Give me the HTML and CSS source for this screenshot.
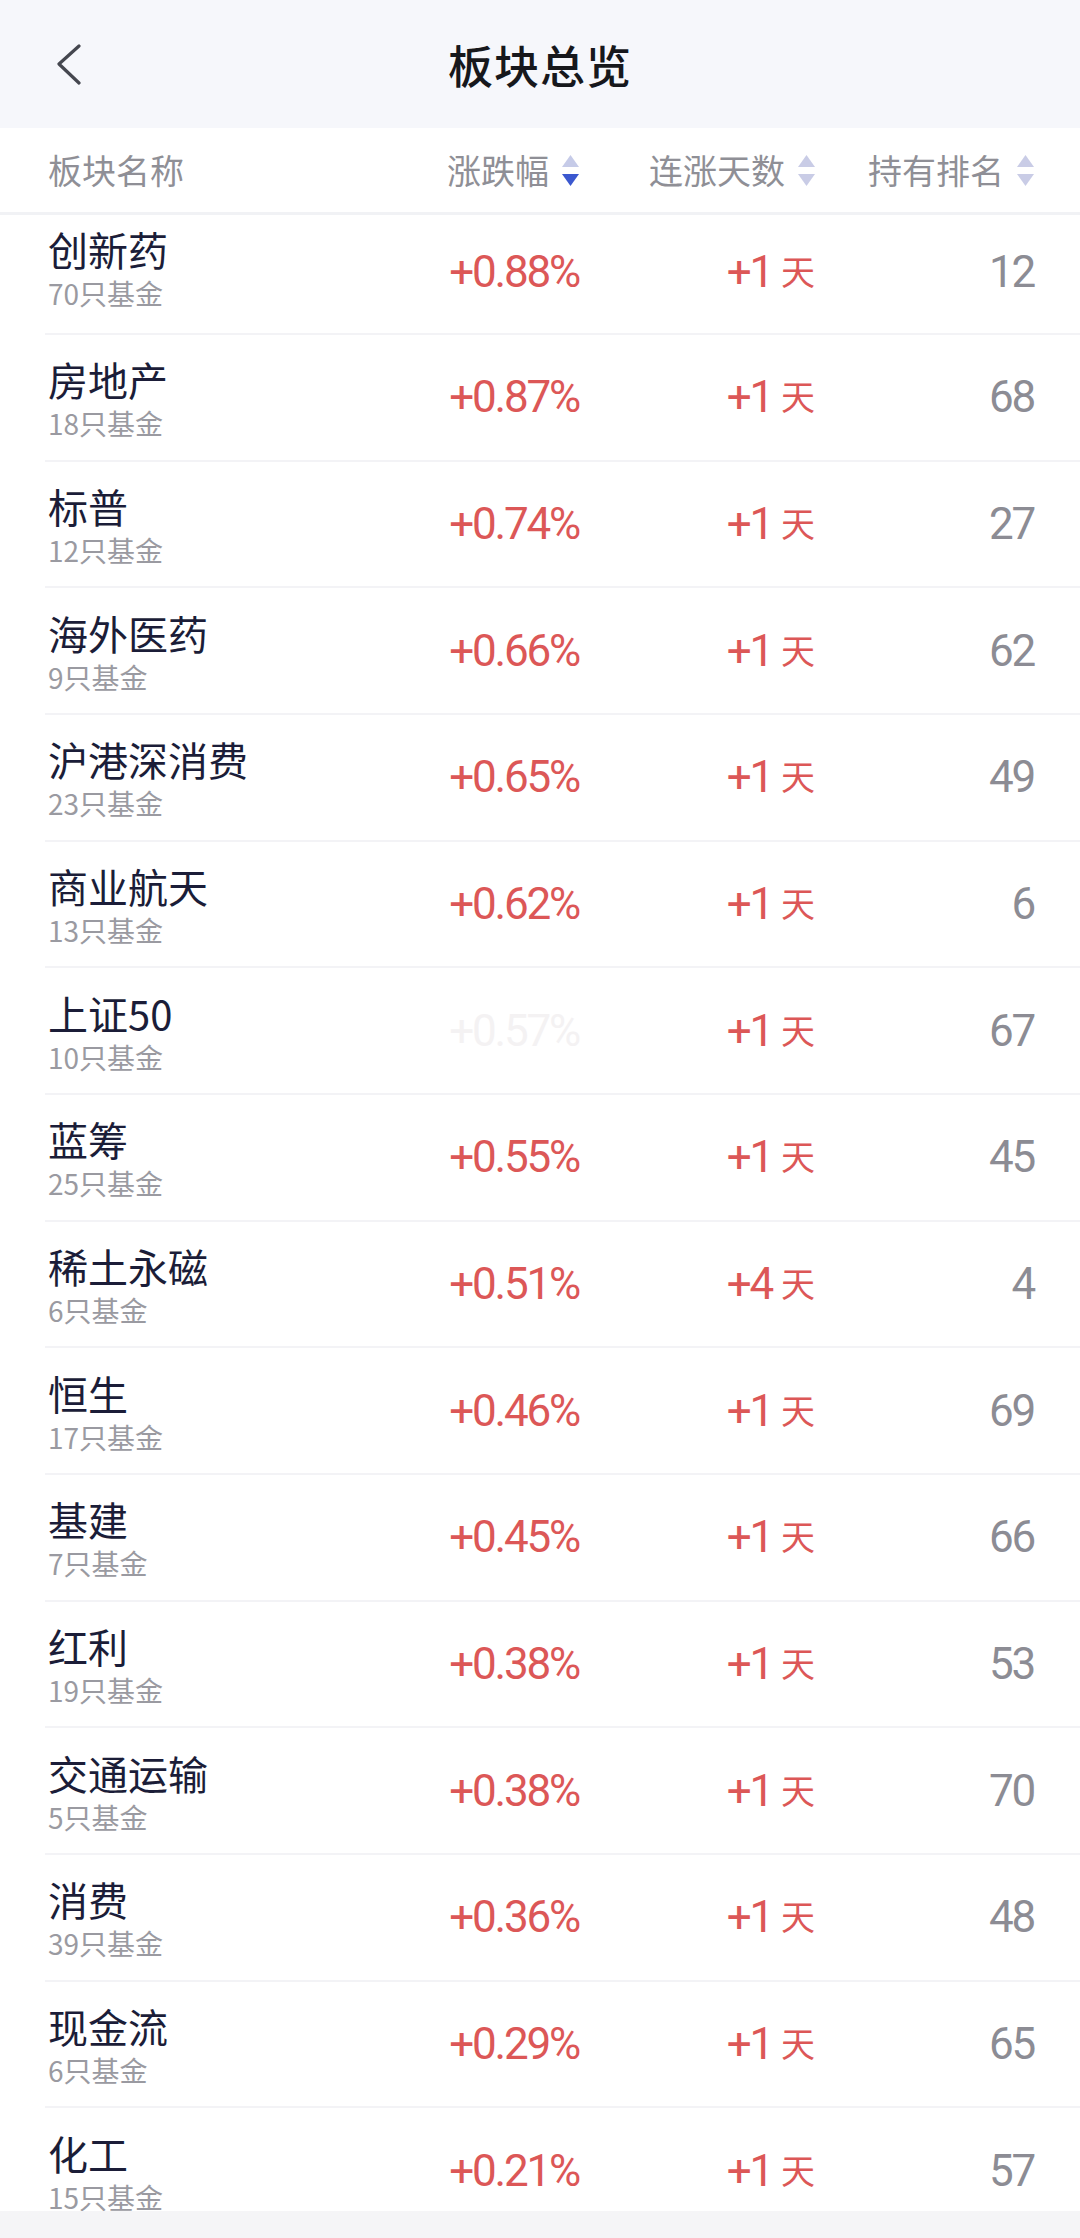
FILE: index.html
```html
<!DOCTYPE html>
<html lang="zh-CN">
<head>
    <meta charset="UTF-8">
    <meta name="viewport" content="width=device-width, initial-scale=1.0">
    <title>板块总览</title>
    <link rel="stylesheet" href="styles.css">
</head>
<body>

    <header class="nav-bar">
        <button class="back" type="button" aria-label="返回">
            <svg width="26" height="42" viewBox="0 0 26 42">
                <polyline points="23,2 3,20 23,39" fill="none" stroke="#45474f" stroke-width="3.2" stroke-linecap="round" stroke-linejoin="round"/>
            </svg>
        </button>
        <h1>板块总览</h1>
    </header>

    <!-- 表头 -->
    <div class="table-head">
        <div class="col-name">板块名称</div>
        <div class="col-sort">涨跌幅
            <svg class="sort" width="17" height="31" viewBox="0 0 17 31">
                <polygon points="8.5,0 17,12 0,12" fill="#c6cbe8"/>
                <polygon points="0,19 17,19 8.5,31" fill="#3b58cf"/>
            </svg>
        </div>
        <div class="col-sort">连涨天数
            <svg class="sort" width="17" height="31" viewBox="0 0 17 31">
                <polygon points="8.5,0 17,12 0,12" fill="#c9cce6"/>
                <polygon points="0,19 17,19 8.5,31" fill="#c9cce6"/>
            </svg>
        </div>
        <div class="col-sort">持有排名
            <svg class="sort" width="17" height="31" viewBox="0 0 17 31">
                <polygon points="8.5,0 17,12 0,12" fill="#c9cce6"/>
                <polygon points="0,19 17,19 8.5,31" fill="#c9cce6"/>
            </svg>
        </div>
    </div>

    <!-- 板块列表 -->
    <main class="list">
        <div class="row">
            <div class="name-cell"><div class="name">创新药</div><div class="count">70只基金</div></div>
            <div class="pct">+0.88%</div>
            <div class="days">+1<span class="unit">天</span></div>
            <div class="rank">12</div>
        </div>
        <div class="row">
            <div class="name-cell"><div class="name">房地产</div><div class="count">18只基金</div></div>
            <div class="pct">+0.87%</div>
            <div class="days">+1<span class="unit">天</span></div>
            <div class="rank">68</div>
        </div>
        <div class="row">
            <div class="name-cell"><div class="name">标普</div><div class="count">12只基金</div></div>
            <div class="pct">+0.74%</div>
            <div class="days">+1<span class="unit">天</span></div>
            <div class="rank">27</div>
        </div>
        <div class="row">
            <div class="name-cell"><div class="name">海外医药</div><div class="count">9只基金</div></div>
            <div class="pct">+0.66%</div>
            <div class="days">+1<span class="unit">天</span></div>
            <div class="rank">62</div>
        </div>
        <div class="row">
            <div class="name-cell"><div class="name">沪港深消费</div><div class="count">23只基金</div></div>
            <div class="pct">+0.65%</div>
            <div class="days">+1<span class="unit">天</span></div>
            <div class="rank">49</div>
        </div>
        <div class="row">
            <div class="name-cell"><div class="name">商业航天</div><div class="count">13只基金</div></div>
            <div class="pct">+0.62%</div>
            <div class="days">+1<span class="unit">天</span></div>
            <div class="rank">6</div>
        </div>
        <div class="row">
            <div class="name-cell"><div class="name">上证50</div><div class="count">10只基金</div></div>
            <div class="pct faded">+0.57%</div>
            <div class="days">+1<span class="unit">天</span></div>
            <div class="rank">67</div>
        </div>
        <div class="row">
            <div class="name-cell"><div class="name">蓝筹</div><div class="count">25只基金</div></div>
            <div class="pct">+0.55%</div>
            <div class="days">+1<span class="unit">天</span></div>
            <div class="rank">45</div>
        </div>
        <div class="row">
            <div class="name-cell"><div class="name">稀土永磁</div><div class="count">6只基金</div></div>
            <div class="pct">+0.51%</div>
            <div class="days">+4<span class="unit">天</span></div>
            <div class="rank">4</div>
        </div>
        <div class="row">
            <div class="name-cell"><div class="name">恒生</div><div class="count">17只基金</div></div>
            <div class="pct">+0.46%</div>
            <div class="days">+1<span class="unit">天</span></div>
            <div class="rank">69</div>
        </div>
        <div class="row">
            <div class="name-cell"><div class="name">基建</div><div class="count">7只基金</div></div>
            <div class="pct">+0.45%</div>
            <div class="days">+1<span class="unit">天</span></div>
            <div class="rank">66</div>
        </div>
        <div class="row">
            <div class="name-cell"><div class="name">红利</div><div class="count">19只基金</div></div>
            <div class="pct">+0.38%</div>
            <div class="days">+1<span class="unit">天</span></div>
            <div class="rank">53</div>
        </div>
        <div class="row">
            <div class="name-cell"><div class="name">交通运输</div><div class="count">5只基金</div></div>
            <div class="pct">+0.38%</div>
            <div class="days">+1<span class="unit">天</span></div>
            <div class="rank">70</div>
        </div>
        <div class="row">
            <div class="name-cell"><div class="name">消费</div><div class="count">39只基金</div></div>
            <div class="pct">+0.36%</div>
            <div class="days">+1<span class="unit">天</span></div>
            <div class="rank">48</div>
        </div>
        <div class="row">
            <div class="name-cell"><div class="name">现金流</div><div class="count">6只基金</div></div>
            <div class="pct">+0.29%</div>
            <div class="days">+1<span class="unit">天</span></div>
            <div class="rank">65</div>
        </div>
        <div class="row">
            <div class="name-cell"><div class="name">化工</div><div class="count">15只基金</div></div>
            <div class="pct">+0.21%</div>
            <div class="days">+1<span class="unit">天</span></div>
            <div class="rank">57</div>
        </div>
    </main>

    <div class="home-bar"></div>

</body>
</html>
```

FILE: styles.css
```css
/* Reset */
* {
    box-sizing: border-box;
}

body, h1 {
    margin: 0;
    padding: 0;
}

body {
    font-family: "Noto Sans CJK SC", "Noto Sans", sans-serif;
    background-color: #ffffff;
    width: 1080px;
    height: 2238px;
    overflow: hidden;
}

/* Barra de navegação */
.nav-bar {
    position: relative;
    height: 128px;
    background-color: #f6f7fb;
    display: flex;
    align-items: center;
    justify-content: center;
}

.back {
    position: absolute;
    left: 56px;
    top: 44px;
    padding: 0;
    border: none;
    background: none;
    display: flex;
}

.nav-bar h1 {
    font-size: 45px;
    font-weight: 500;
    color: #17181c;
    line-height: 1;
    letter-spacing: 1px;
}

/* Cabeçalho da tabela */
.table-head {
    height: 87px;
    padding: 0 46px 0 48px;
    border-bottom: 3px solid #f1f2f5;
    display: grid;
    grid-template-columns: 1fr 231px 236px 219px;
    align-items: center;
    font-size: 34px;
    color: #8f8f96;
    line-height: 1;
}

.col-sort {
    display: flex;
    align-items: center;
    justify-content: flex-end;
    gap: 13px;
}

/* Lista */
.list {
    height: 1996px;
    overflow: hidden;
}

.row {
    height: 126.67px;
    margin-left: 45px;
    padding: 0 46px 0 3px;
    border-bottom: 2px solid #f3f3f6;
    display: grid;
    grid-template-columns: 1fr 231px 236px 219px;
    align-items: center;
}

.row:first-child {
    height: 120px;
    padding-bottom: 4px;
}

.name-cell {
    display: flex;
    flex-direction: column;
    margin-top: 4px;
}

.row:first-child .name-cell {
    margin-top: -6px;
}

.name {
    font-size: 40px;
    line-height: 48px;
    color: #1b1d38;
}

.count {
    font-size: 28px;
    line-height: 40px;
    color: #9a9aa1;
}

.pct, .days, .rank {
    font-family: Roboto, "Noto Sans", sans-serif;
    font-weight: 400;
    font-size: 44px;
    letter-spacing: -2.2px;
    line-height: 1;
    text-align: right;
}

.pct, .days {
    color: #dc5757;
}

.pct.faded {
    color: #f4f2f3;
}

.unit {
    font-family: "Noto Sans CJK SC", sans-serif;
    font-size: 34px;
    letter-spacing: 0;
    margin-left: 9px;
    vertical-align: 2px;
}

.rank {
    color: #8c8c94;
}

/* Barra inferior */
.home-bar {
    height: 27px;
    background-color: #f5f5f7;
}
```
